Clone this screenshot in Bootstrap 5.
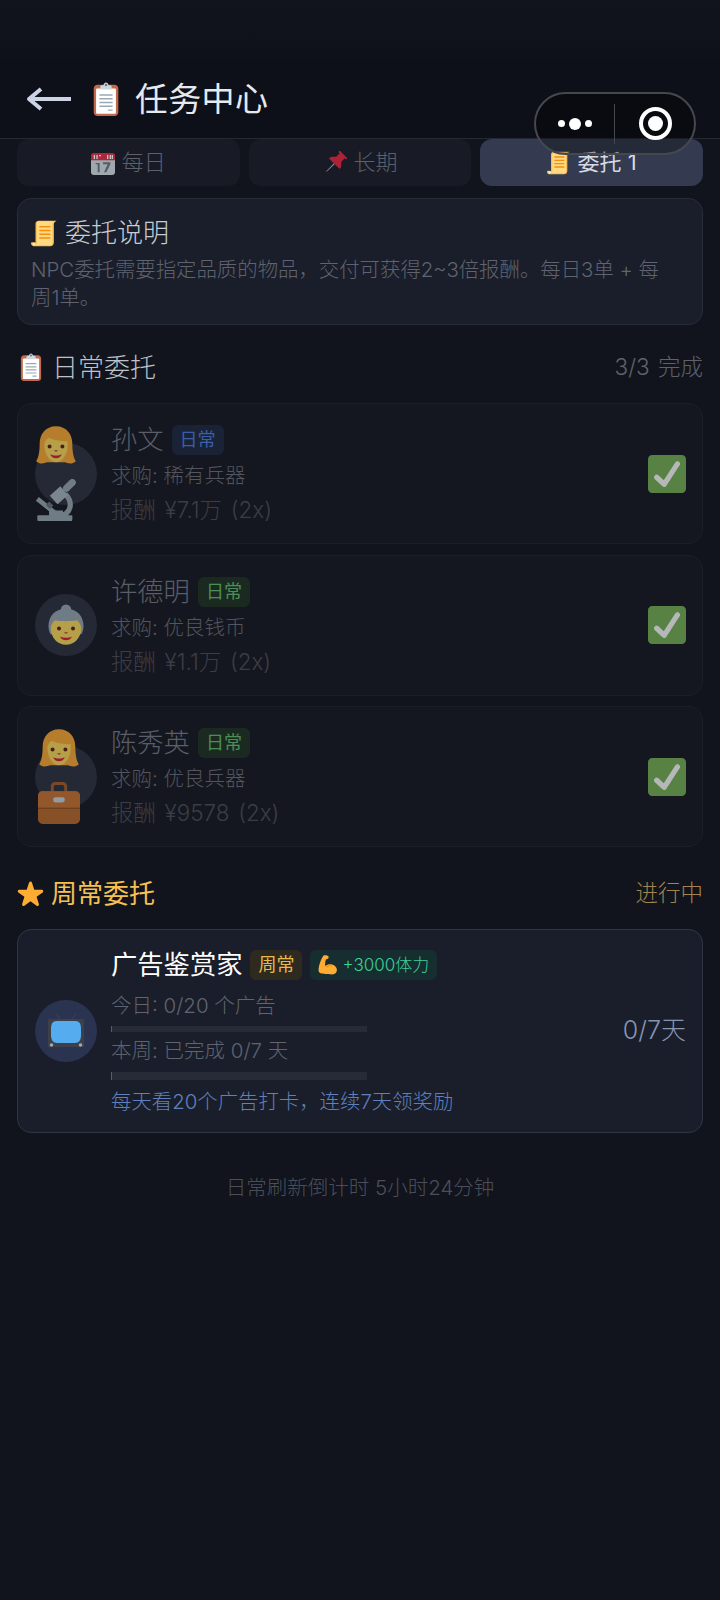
<!doctype html>
<html lang="zh">
<head>
<meta charset="utf-8">
<title>任务中心</title>
<link href="https://cdn.jsdelivr.net/npm/bootstrap@5.3.0/dist/css/bootstrap.min.css" rel="stylesheet">
<style>
html,body{height:100%}
body{background:#11141c;font-family:Inter,"Noto Sans CJK SC",sans-serif;font-weight:300;color:#c8ccd4;width:720px;min-height:1600px;overflow:hidden}
.topstrip{height:60px;background:linear-gradient(#11141c,#0e1119)}
.headbar{height:79px;background:#0d1018;border-bottom:1px solid #252934;padding-left:26px}
.headbar h1{font-size:33px;line-height:40px;font-weight:400;color:#e6e9ef;margin:0 0 0 12px;letter-spacing:.3px}
.emj{display:block;flex:none}
.clipicon{margin-left:17px}
.capsule{position:absolute;left:534px;top:92px;width:162px;height:63px;border-radius:32px;border:2px solid #45484f;background:rgba(0,0,0,.28)}
.capsule .cap-a{width:80px}
.capsule .cap-b{width:80px;padding-left:2px}
.capsule .cap-div{width:1px;height:40px;background:#44474d}
.dot{border-radius:50%;background:#fff;width:7px;height:7px}
.dot.big{width:12px;height:12px;margin:0 4px}
.target{width:33px;height:33px;border-radius:50%;border:4px solid #fff}
.target i{display:block;width:15px;height:15px;border-radius:50%;background:#fff}
.mainwrap{padding:0 17px 0}
.tabset{gap:9px}
.tabitem{flex:1 1 0;height:47px;border-radius:12px;background:#181b25;color:#5c606b;font-size:22px;gap:7px}
.tabitem.on{background:#343b50;color:#d5d9e2;font-weight:400}
.tabitem .emj{opacity:.75}
.tabitem.on .emj{opacity:1}
.infobox{margin-top:12px;height:127px;border-radius:14px;background:#1a1e2a;border:1px solid #272c39;padding:16px 30px 0 13px}
.infohead{font-size:26px;line-height:36px;color:#c8ccd4;gap:7px;font-weight:300}
.infotext{font-size:20.4px;line-height:28px;color:#5e636f;margin-top:5px}
.sechead{height:36px;margin-top:24px;margin-bottom:18px}
.sechead.wk{margin-top:28px;margin-bottom:18px}
.sectitle{font-size:26px;color:#bcc1ca;gap:7px;font-weight:300}
.sechead .secnote{font-size:22.5px;color:#5d616c;word-spacing:2px}
.sectitle.gold{color:#f5c152;font-weight:400}
.secnote.gold{color:#a2854e!important}
.taskcard{height:141px;border-radius:14px;background:#1a1e2a;border:1px solid #2b3040;padding:0 16px 0 17px;margin-bottom:10.5px}
.taskcard.done{background:#14171f;border-color:#1b1e28}
.taskcard.done .dimmer{opacity:.69}
.taskcard.done .taskbody{padding-top:2px}
.taskcard.done .nameline{margin-bottom:1px}
.taskcard.wkc{height:204px;border-color:#2f3544;margin-bottom:0}
.avatar{width:62px;height:62px;border-radius:50%;background:#2e3240;flex:none;margin-right:14px;position:relative}
.avatar.blue{background:#2a3350}
.avatar .stack{gap:12px;position:absolute;left:0;top:-18px;width:44px}
.avatar .stack.shifted{left:3px}
.taskbody{min-width:0}
.nameline{gap:8px;height:36px}
.taskname{font-size:26.3px;color:#7a7e8a;font-weight:300;line-height:36px}
.wkc .taskname{color:#fff;font-weight:400}
.chip{font-size:18px;line-height:30px;height:30px;padding:0 8px;border-radius:6px;font-weight:400;gap:4px}
.chip.bl{background:#1e2740;color:#4f7fe0}
.chip.gr{background:#1f3323;color:#66c46e}
.chip.ye{background:#2e2a1f;color:#e8b94e}
.chip.te{background:#162e2f;color:#3fcf9b;font-size:17px;font-weight:300}
.want{font-size:20.5px;line-height:34px;color:#6e717a}
.reward{font-size:22.4px;line-height:34px;color:#4c4f58;word-spacing:2.5px}
.wkc .taskbody{padding-top:3px}
.wkc .want{color:#5f6470;line-height:30px}
.wkc .nameline{margin-bottom:8px}
.trackbar{width:256px;background:#272b38;border-left:1px solid #4e5c86}
.trackbar.t1{height:6px;margin:5px 0 4px}
.trackbar.t2{height:8px;margin:6px 0 5px}
.adnote{font-size:20.4px;line-height:34px;color:#5f80bd}
.daysleft{font-size:25px;color:#8494b3;margin-left:auto}
.countdown{font-size:20.5px;color:#4a4e5a;margin-top:39px;line-height:32px}
</style>
</head>
<body>
<svg width="0" height="0" class="d-block position-absolute">
<defs>
<symbol id="e-clip" viewBox="0 0 36 36"><path fill="#C1694F" d="M31 32c0 2.200-1.800 4-4 4H9c-2.200 0-4-1.800-4-4V7c0-2.200 1.800-4 4-4h18c2.200 0 4 1.800 4 4z"/><rect fill="#FFF" x="7.500" y="7" width="21" height="26.500" rx="1"/><path fill="#99AAB5" d="M11 13h14v1.500H11zM11 17h14v1.500H11zM11 21h14v1.500H11zM11 25h14v1.500H11zM20 29h5v1.500h-5z"/><path fill="#CCD6DD" d="M22.500 3.500h-1.800C20.500 1.800 19.300.5 18 .5s-2.500 1.300-2.700 3h-1.800C12.400 3.500 12 4.500 12 5.500V8h12V5.500c0-1-.4-2-1.500-2z"/><path fill="#66757F" d="M18 1.800a1.300 1.300 0 110 2.600 1.300 1.300 0 010-2.600z"/></symbol>
<symbol id="e-cal" viewBox="0 0 36 36"><path fill="#CCD6DD" d="M36 32c0 2.200-1.800 4-4 4H4c-2.200 0-4-1.800-4-4V8c0-2.200 1.800-4 4-4h28c2.200 0 4 1.800 4 4z"/><path fill="#DD2E44" d="M36 14H0V7c0-2.200 1.800-4 4-4h28c2.200 0 4 1.800 4 4z"/><path fill="#fff" d="M4 6h2v6H4zM8 6h2v6H8zM12 6h3v2h-3zM24 6h2v6h-2zM28 6h2v6h-2zM31 6h2v6h-2z"/><path fill="#66757F" d="M7 18h6v14h-3V20H7zM18 17h11v3l-6 12h-3.500l5.500-12h-7z"/></symbol>
<symbol id="e-pin" viewBox="0 0 36 36"><g transform="rotate(45 18 18) translate(18 18) scale(.76) translate(-18 -18)"><path fill="#99AAB5" d="M16.800 20h2.400l-.5 22h-1.400z"/><path fill="#E0243C" d="M7 -4c0-1.200 1-2 2-2h18c1 0 2 .8 2 2s-1 2-2 2h-2v8c0 3.500 7 6 8 12 .2 1.200-.5 2-1.500 2h-27c-1 0-1.700-.8-1.500-2 1-6 8-8.500 8-12v-8H9c-1 0-2-.8-2-2z"/></g></symbol>
<symbol id="e-scroll" viewBox="0 0 36 36"><path fill="#F9BE55" d="M6 30V5c0-2.200 1.800-4 4-4h24l-2 1.500c-1 .8-1.500 1.500-1.500 3.500v24c0 3-2 5-5 5H4c-2.200 0-4-1.800-4-4 0-.8.500-1.500 1.500-1.500z"/><path fill="#FFD983" d="M8 5c0-2.200 1.800-3.500 4-3.500h19c-1.500 1-2.500 2.500-2.500 4.500v24c0 2-1.500 3.500-3.500 3.500H5c1.500-1 3-2 3-4z"/><path fill="#F4900C" d="M11 8h15v2H11zM11 13h15v2H11zM11 18h15v2H11zM11 23h15v2H11z"/><circle cx="4" cy="32" r="2" fill="#FFE8B6"/></symbol>
<symbol id="e-star" viewBox="0 0 36 36"><path fill="#FFAC33" d="M27.287 34.627c-.404 0-.806-.124-1.152-.371L18 28.422l-8.135 5.834c-.693.496-1.623.496-2.312-.008-.689-.499-.979-1.385-.721-2.194l3.034-9.792-8.062-5.681c-.685-.505-.97-1.393-.708-2.203.264-.808 1.016-1.357 1.866-1.363L12.947 13l3.179-9.549c.268-.809 1.023-1.353 1.874-1.353.851 0 1.606.545 1.875 1.353L23 13l10.036.015c.853.006 1.606.556 1.867 1.363.263.81-.022 1.698-.708 2.203l-8.062 5.681 3.034 9.792c.26.809-.033 1.695-.72 2.194-.347.254-.753.379-1.16.379z"/></symbol>
<symbol id="e-check" viewBox="0 0 36 36"><path fill="#77B255" d="M36 32c0 2.209-1.791 4-4 4H4c-2.209 0-4-1.791-4-4V4c0-2.209 1.791-4 4-4h28c2.209 0 4 1.791 4 4v28z"/><path fill="#FFF" d="M29.28 6.362c-1.156-.751-2.704-.422-3.458.736L14.936 23.877l-5.029-4.65c-1.014-.938-2.596-.875-3.533.138-.937 1.014-.875 2.596.139 3.533l7.209 6.666c.48.445 1.09.665 1.696.665.673 0 1.534-.282 2.099-1.139.332-.506 12.5-19.27 12.5-19.27.751-1.159.421-2.707-.737-3.458z"/></symbol>
<symbol id="e-woman" viewBox="0 0 36 36"><path fill="#FFAC33" d="M18 1C9 1 4 8 4 16c0 7-1 12-3 15 3 3 7 2 9 1h16c2 1 6 2 9-1-2-3-3-8-3-15 0-8-5-15-14-15z"/><path fill="#FFDC5D" d="M8 17c0-2 2-5 4-6 3 2 10 3 16 3v4c0 6-4 14-10 14S8 24 8 17z"/><circle cx="12.500" cy="18.500" r="1.700" fill="#662113"/><circle cx="23.500" cy="18.500" r="1.700" fill="#662113"/><path fill="#C1694F" d="M16.500 21.500h3c0 1-.7 1.500-1.500 1.500s-1.500-.5-1.500-1.500z"/><path fill="#DF1F32" d="M13 25c3 1.500 7 1.500 10 0-1 2.500-3 3.500-5 3.500s-4-1-5-3.500z"/></symbol>
<symbol id="e-granny" viewBox="0 0 36 36"><circle cx="18" cy="5" r="4.500" fill="#99AAB5"/><path fill="#99AAB5" d="M18 4C9 4 3 10 3 19c0 3 1 6 2 7h26c1-1 2-4 2-7 0-9-6-15-15-15z"/><path fill="#FFDC5D" d="M5 21c0-3 2-6 4-7 4 1 13 1 18 0 2 1 4 4 4 7 0 8-6 14-13 14S5 29 5 21z"/><circle cx="12" cy="21" r="1.700" fill="#662113"/><circle cx="24" cy="21" r="1.700" fill="#662113"/><path fill="#C1694F" d="M16.500 24h3c0 1-.7 1.500-1.500 1.500s-1.500-.5-1.500-1.500z"/><path fill="#DF1F32" d="M13 28c3 1.200 7 1.200 10 0-1 2.300-3 3-5 3s-4-.7-5-3z"/></symbol>
<symbol id="e-micro" viewBox="0 0 36 36"><rect x="2" y="31" width="30" height="5" rx="1" fill="#99AAB5"/><path d="M26 13C33 20 31 29 22 32" fill="none" stroke="#99AAB5" stroke-width="4.500"/><path d="M2 17L17 29" stroke="#99AAB5" stroke-width="4"/><path d="M12 27h12v5H12z" fill="#99AAB5"/><path d="M16 18L25 10" stroke="#AAB8C2" stroke-width="10"/><path d="M27 8L32 3" stroke="#99AAB5" stroke-width="6" stroke-linecap="round"/><path d="M14 21L11 24" stroke="#66757F" stroke-width="5"/></symbol>
<symbol id="e-case" viewBox="0 0 36 36"><path fill="#A85F2B" d="M11 9V4c0-2 1-4 4-4h6c3 0 4 2 4 4v5h-2.500V4.500c0-1-.5-2-1.500-2h-6c-1 0-1.500 1-1.500 2V9z"/><path fill="#BC6A2A" d="M36 32c0 2.200-1.800 4-4 4H4c-2.200 0-4-1.800-4-4V12c0-2.200 1.800-4 4-4h28c2.200 0 4 1.800 4 4z"/><path fill="#CB742F" d="M0 12c0-2.200 1.800-4 4-4h28c2.200 0 4 1.800 4 4v10H0z"/><path fill="#8A4B1E" d="M0 22h36v1H0z"/><rect x="13" y="13" width="10" height="4.500" rx="2" fill="#CCD6DD"/></symbol>
<symbol id="e-tv" viewBox="0 0 36 36"><path d="M12 6L8 1M24 6l4-5" stroke="#3d4450" stroke-width="1"/><path fill="#3d4048" d="M1 6h34c.6 0 1 .4 1 1v27H0V7c0-.6.4-1 1-1z"/><path fill="#55ACEE" d="M9 8h18c4 0 6 2 6 8v6c0 5-2 8-6 8H9c-4 0-6-3-6-8v-6c0-6 2-8 6-8z"/><circle cx="3.500" cy="32" r="1.800" fill="#99AAB5"/><circle cx="32.500" cy="32" r="1.800" fill="#99AAB5"/></symbol>
<symbol id="e-arm" viewBox="0 0 36 36"><path fill="#FFAC33" d="M10 1c3-1.500 8-.5 9 2 .8 2-.5 4-3 4.500L14 8c-1 4-1.500 8-1 12 3-3 8-4 12-3 5 1 9 5 9 10 0 5-4 8-9 8-7 0-17-1-20-2-3-1-4-3-4-6 0-6 4-20 9-26z"/><path fill="#F4900C" d="M14 20c4-2 10-2 13 1-4-1-8-1-11 2z"/></symbol>
</defs>
</svg>

<div class="topstrip"></div>
<header class="headbar d-flex align-items-center">
  <svg width="46" height="26" viewBox="0 0 46 26" class="emj"><path d="M15 3L3 13l12 10M3 13h42" fill="none" stroke="#ccd3e4" stroke-width="4" stroke-linejoin="round"/></svg>
  <svg width="34" height="34" class="emj clipicon"><use href="#e-clip"/></svg>
  <h1>任务中心</h1>
</header>

<main class="mainwrap">
  <div class="tabset d-flex">
    <div class="tabitem d-flex align-items-center justify-content-center"><svg width="24" height="24" class="emj"><use href="#e-cal"/></svg>每日</div>
    <div class="tabitem d-flex align-items-center justify-content-center"><svg width="24" height="24" class="emj"><use href="#e-pin"/></svg>长期</div>
    <div class="tabitem on d-flex align-items-center justify-content-center"><svg width="24" height="24" class="emj"><use href="#e-scroll"/></svg>委托 1</div>
  </div>

  <section class="infobox">
    <div class="infohead d-flex align-items-center"><svg width="27" height="27" class="emj"><use href="#e-scroll"/></svg>委托说明</div>
    <div class="infotext">NPC委托需要指定品质的物品，交付可获得2~3倍报酬。每日3单 + 每<br>周1单。</div>
  </section>

  <div class="sechead d-flex justify-content-between align-items-center">
    <div class="sectitle d-flex align-items-center"><svg width="28" height="28" class="emj"><use href="#e-clip"/></svg>日常委托</div>
    <div class="secnote">3/3 完成</div>
  </div>

  <article class="taskcard done d-flex align-items-center">
    <div class="dimmer d-flex align-items-center flex-grow-1">
      <div class="avatar"><div class="stack d-flex flex-column"><svg width="42" height="42" class="emj"><use href="#e-woman"/></svg><svg width="42" height="42" class="emj"><use href="#e-micro"/></svg></div></div>
      <div class="taskbody">
        <div class="nameline d-flex align-items-center"><span class="taskname">孙文</span><span class="chip bl">日常</span></div>
        <div class="want">求购: 稀有兵器</div>
        <div class="reward">报酬 ¥7.1万 (2x)</div>
      </div>
      <svg width="38" height="38" class="emj ms-auto"><use href="#e-check"/></svg>
    </div>
  </article>

  <article class="taskcard done d-flex align-items-center">
    <div class="dimmer d-flex align-items-center flex-grow-1">
      <div class="avatar d-flex align-items-center justify-content-center"><svg width="42" height="42" class="emj"><use href="#e-granny"/></svg></div>
      <div class="taskbody">
        <div class="nameline d-flex align-items-center"><span class="taskname">许德明</span><span class="chip gr">日常</span></div>
        <div class="want">求购: 优良钱币</div>
        <div class="reward">报酬 ¥1.1万 (2x)</div>
      </div>
      <svg width="38" height="38" class="emj ms-auto"><use href="#e-check"/></svg>
    </div>
  </article>

  <article class="taskcard done d-flex align-items-center">
    <div class="dimmer d-flex align-items-center flex-grow-1">
      <div class="avatar"><div class="stack shifted d-flex flex-column"><svg width="42" height="42" class="emj"><use href="#e-woman"/></svg><svg width="42" height="42" class="emj"><use href="#e-case"/></svg></div></div>
      <div class="taskbody">
        <div class="nameline d-flex align-items-center"><span class="taskname">陈秀英</span><span class="chip gr">日常</span></div>
        <div class="want">求购: 优良兵器</div>
        <div class="reward">报酬 ¥9578 (2x)</div>
      </div>
      <svg width="38" height="38" class="emj ms-auto"><use href="#e-check"/></svg>
    </div>
  </article>

  <div class="sechead wk d-flex justify-content-between align-items-center">
    <div class="sectitle gold d-flex align-items-center"><svg width="27" height="27" class="emj"><use href="#e-star"/></svg>周常委托</div>
    <div class="secnote gold">进行中</div>
  </div>

  <article class="taskcard wkc d-flex align-items-center">
    <div class="avatar blue d-flex align-items-center justify-content-center"><svg width="36" height="36" class="emj"><use href="#e-tv"/></svg></div>
    <div class="taskbody">
      <div class="nameline d-flex align-items-center"><span class="taskname">广告鉴赏家</span><span class="chip ye">周常</span><span class="chip te d-flex align-items-center"><svg width="20" height="20" class="emj"><use href="#e-arm"/></svg>+3000体力</span></div>
      <div class="want">今日: 0/20 个广告</div>
      <div class="trackbar t1"></div>
      <div class="want">本周: 已完成 0/7 天</div>
      <div class="trackbar t2"></div>
      <div class="adnote">每天看20个广告打卡，连续7天领奖励</div>
    </div>
    <div class="daysleft">0/7天</div>
  </article>

  <div class="countdown text-center">日常刷新倒计时 5小时24分钟</div>
</main>

<div class="capsule d-flex align-items-center">
  <div class="cap-a d-flex align-items-center justify-content-center"><span class="dot"></span><span class="dot big"></span><span class="dot"></span></div>
  <div class="cap-div"></div>
  <div class="cap-b d-flex align-items-center justify-content-center"><span class="target d-flex align-items-center justify-content-center"><i></i></span></div>
</div>
<script src="https://cdn.jsdelivr.net/npm/bootstrap@5.3.0/dist/js/bootstrap.bundle.min.js"></script>
</body>
</html>
